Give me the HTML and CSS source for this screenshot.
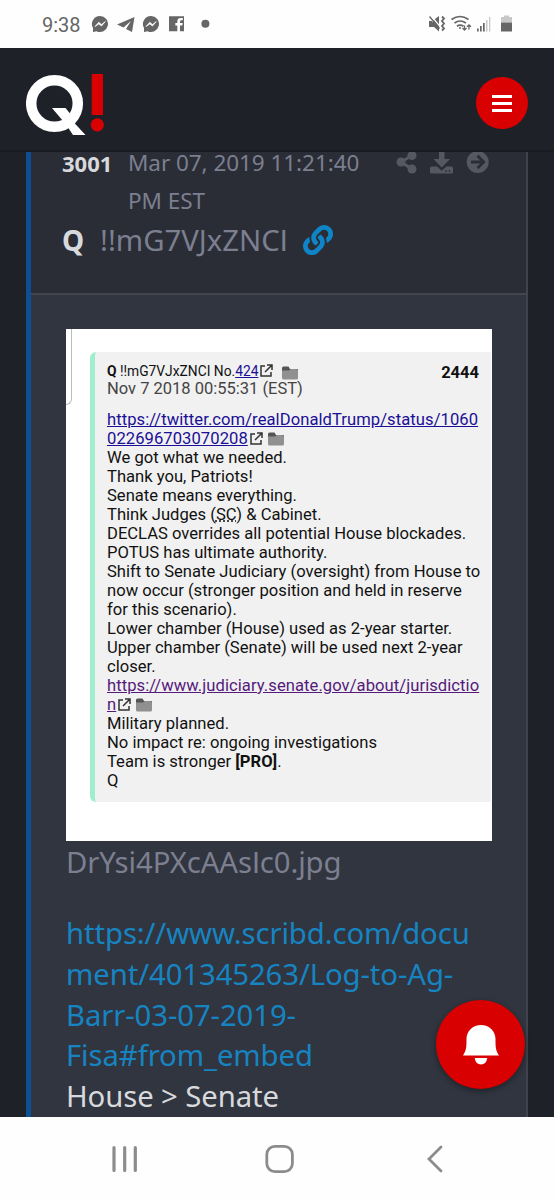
FILE: index.html
```
<!DOCTYPE html>
<html lang="en">
<head>
    <meta charset="utf-8">
    <meta name="viewport" content="width=device-width, initial-scale=1.0">
    <title>Q!</title>
    <link rel="stylesheet" href="styles.css">
</head>
<body>
    <div class="statusbar">
        <span class="clock">9:38</span>
        <svg class="status-left" width="120" height="18" viewBox="0 0 120 18" fill="#666">
            <path d="M9 1a8 8 0 1 1-3.500 15.200L2 17V13A8 8 0 0 1 9 1z"/>
            <path d="M4 11.500l3.800-4.200 2.700 2.200 3.800-3-3.800 4.500-2.700-2z" fill="#fff" stroke="#fff" stroke-width=".7"/>
            <path d="M26 9.500L43.500 2 41 17l-6-3 5-8-7.500 6.500z"/>
            <path d="M60 1a8 8 0 1 1-3.500 15.200L53 17V13A8 8 0 0 1 60 1z"/>
            <path d="M55 11.500l3.800-4.200 2.700 2.200 3.800-3-3.800 4.500-2.700-2z" fill="#fff" stroke="#fff" stroke-width=".7"/>
            <path d="M78 1.300h15v15h-4v-5.800h2.300l.4-2.400H89V6.600q0-1.300 1.400-1.300h1.400V3h-2q-3.500 0-3.500 3.400v1.700h-2v2.400h2v5.800H78z"/>
            <circle cx="114.400" cy="8.800" r="4"/>
        </svg>
        <svg class="status-right" width="86" height="18" viewBox="0 0 86 18" fill="#666">
            <path d="M1 6h3l7 10.500-5-4.500H1zM7 4l4-3v15.500L5 11V6z"/>
            <path d="M2.500 0l10 12" stroke="#fff" stroke-width="1.200"/>
            <path d="M1.500 1.500l10 12" stroke="#666" stroke-width="1.300"/>
            <path d="M14 1.500l2 2-2 2.500 2 2.500-2 2.500 2 2.500-2 2" fill="none" stroke="#666" stroke-width="1.800"/>
            <g fill="none" stroke="#666" stroke-width="1.700">
                <path d="M23.500 4.500q8.500-6 17 0M26.500 8q5.500-4 11.500 0M29 11.200q3-2.200 6.500 0"/>
                <path d="M36.500 10.500v5M34.500 13l2 2 2-2M41 14.500v-5M39 11.800l2-2 2 2" stroke-width="1.300"/>
            </g>
            <circle cx="32" cy="13" r="1"/>
            <path d="M49 13.500h1.700v3H49zM52 11h1.700v5.500H52zM55 8h1.700v8.500H55z"/>
            <path d="M58 5h1.500v11.500H58zM61 2h1.300v14.500H61zM73 2h3V.5h5V2h3v5.500H73z" fill="#c8c8c8"/>
            <path d="M73 7.500h11v9H73z"/>
        </svg>
    </div>
    <div class="topbar">
        <svg class="logo" width="80" height="62" viewBox="0 0 80 62">
            <circle cx="28.500" cy="29.500" r="23.300" fill="none" stroke="#fff" stroke-width="10.500"/>
            <path d="M26 34h13.500l4.500 5.500-2 10 5-2 12.500 13.500H47L40 50.500z" fill="#fff"/>
            <path d="M65.700 0h11.300v41H65.700z" fill="#d80000"/>
            <circle cx="71.300" cy="50.800" r="6.600" fill="#d80000"/>
        </svg>
        <button class="menu" aria-label="Menu">
            <span></span><span></span><span></span>
        </button>
    </div>
    <div class="feed">
        <div class="card">
            <div class="card-head">
                <div class="meta">
                    <b class="num">3001</b>
                    <span class="date">Mar 07, 2019 11:21:40<br>PM EST</span>
                    <svg class="tools" width="94" height="24" viewBox="0 0 94 24" fill="#555862">
                        <path d="M16 4.500L5 11l11 7" fill="none" stroke="#555862" stroke-width="3"/>
                        <circle cx="5" cy="11" r="4.500"/>
                        <circle cx="16" cy="4.500" r="4.500"/>
                        <circle cx="16" cy="18" r="4.500"/>
                        <path d="M43 0h5.500v8H54l-8.300 8.500L37.500 8H43z"/>
                        <path d="M36 15.500h5l4.700 4.200 4.700-4.200h5q1.600 0 1.600 1.500v4q0 1.500-1.500 1.500h-20q-1.500 0-1.500-1.500v-4q0-1.500 2-1.500z"/>
                        <circle cx="50" cy="20" r=".9" fill="#2a2d35"/>
                        <circle cx="53.500" cy="20" r=".9" fill="#2a2d35"/>
                        <circle cx="81.700" cy="11" r="11"/>
                        <path d="M75 11h12M81.500 4.800l6.200 6.200-6.200 6.200" fill="none" stroke="#2a2d35" stroke-width="2.800"/>
                    </svg>
                </div>
                <div class="author">
                    <b>Q</b>
                    <span class="trip">!!mG7VJxZNC<span class="cap-i">I</span></span>
                    <svg class="chain" width="30" height="30" viewBox="0 0 512 512" fill="#0f84c6">
                        <path d="M326.612 185.391c59.747 59.809 58.927 155.698.36 214.590-.11.120-.24.250-.36.370l-67.200 67.200c-59.270 59.270-155.699 59.262-214.960 0-59.270-59.260-59.270-155.700 0-214.960l37.106-37.106c9.840-9.840 26.786-3.300 27.294 10.606.648 17.722 3.826 35.527 9.690 52.721 1.986 5.822.567 12.262-3.783 16.612l-13.087 13.087c-28.026 28.026-28.905 73.660-1.155 101.960 28.024 28.579 74.086 28.749 102.325.510l67.200-67.190c28.191-28.191 28.073-73.757 0-101.830-3.701-3.694-7.429-6.564-10.341-8.569a16.037 16.037 0 0 1-6.947-12.606c-.396-10.567 3.348-21.456 11.698-29.806l21.054-21.055c5.521-5.521 14.182-6.199 20.584-1.731a152.482 152.482 0 0 1 20.522 17.197zM467.547 44.449c-59.261-59.262-155.690-59.270-214.960 0l-67.200 67.200c-.12.120-.25.250-.36.370-58.566 58.892-59.387 154.781.36 214.590a152.454 152.454 0 0 0 20.521 17.196c6.402 4.468 15.064 3.789 20.584-1.731l21.054-21.055c8.350-8.350 12.094-19.239 11.698-29.806a16.037 16.037 0 0 0-6.947-12.606c-2.912-2.005-6.640-4.875-10.341-8.569-28.073-28.073-28.191-73.639 0-101.830l67.200-67.190c28.239-28.239 74.300-28.069 102.325.510 27.750 28.300 26.872 73.934-1.155 101.960l-13.087 13.087c-4.350 4.350-5.769 10.790-3.783 16.612 5.864 17.194 9.042 34.999 9.690 52.721.509 13.906 17.454 20.446 27.294 10.606l37.106-37.106c59.271-59.259 59.271-155.699.001-214.959z"/>
                    </svg>
                </div>
            </div>
            <div class="card-body">
                <div class="shot">
                    <div class="edge"></div>
                    <div class="post">
                        <div class="post-head">
                            <div>
                                <div class="post-id"><b>Q</b> !!mG7VJxZNCI No.<a>424</a><svg class="ext" viewBox="0 0 13 13"><path d="M5 2H1v10h10V8M7 1h5v5M12 1L5 8"/></svg><svg class="folder gap" viewBox="0 0 16 14"><path d="M0 2q0-1.500 1.500-1.500h5L8 3H16v9H0z" fill="#555"/><path d="M0 4.500h7L9 3h5.500Q16 3 16 4.500V12q0 1.500-1.500 1.500h-13Q0 13.500 0 12z" fill="#909090"/></svg></div>
                                <div class="post-date">Nov 7 2018 00:55:31 (EST)</div>
                            </div>
                            <b class="post-num">2444</b>
                        </div>
                        <div class="post-text">
                            <a>https://twitter.com/realDonaldTrump/status/1060</a><br>
                            <a>022696703070208</a><svg class="ext" viewBox="0 0 13 13"><path d="M5 2H1v10h10V8M7 1h5v5M12 1L5 8"/></svg><svg class="folder" viewBox="0 0 16 14"><path d="M0 2q0-1.500 1.500-1.500h5L8 3H16v9H0z" fill="#555"/><path d="M0 4.500h7L9 3h5.500Q16 3 16 4.500V12q0 1.500-1.500 1.500h-13Q0 13.500 0 12z" fill="#909090"/></svg><br>
                            We got what we needed.<br>
                            Thank you, Patriots!<br>
                            Senate means everything.<br>
                            Think Judges (<abbr>SC</abbr>) &amp; Cabinet.<br>
                            DECLAS overrides all potential House blockades.<br>
                            POTUS has ultimate authority.<br>
                            Shift to Senate Judiciary (oversight) from House to<br>
                            now occur (stronger position and held in reserve<br>
                            for this scenario).<br>
                            Lower chamber (House) used as 2-year starter.<br>
                            Upper chamber (Senate) will be used next 2-year<br>
                            closer.<br>
                            <a class="visited">https://www.judiciary.senate.gov/about/jurisdictio</a><br>
                            <a class="visited">n</a><svg class="ext" viewBox="0 0 13 13"><path d="M5 2H1v10h10V8M7 1h5v5M12 1L5 8"/></svg><svg class="folder" viewBox="0 0 16 14"><path d="M0 2q0-1.500 1.500-1.500h5L8 3H16v9H0z" fill="#555"/><path d="M0 4.500h7L9 3h5.500Q16 3 16 4.500V12q0 1.500-1.500 1.500h-13Q0 13.500 0 12z" fill="#909090"/></svg><br>
                            Military planned.<br>
                            No impact re: ongoing investigations<br>
                            Team is stronger <b>[PRO]</b>.<br>
                            Q
                        </div>
                    </div>
                </div>
                <div class="filename">DrYsi4PXcAAs<span class="cap-i">I</span>c0.jpg</div>
                <div class="message">
                    <a>https://www.scribd.com/docu<br>ment/401345263/Log-to-Ag-<br>Barr-03-07-2019-<br>Fisa#from_embed</a><br>
                    House &gt; Senate
                </div>
            </div>
        </div>
    </div>
    <div class="navbar">
        <svg width="26" height="28" viewBox="0 0 26 28" stroke="#8c8c8c" stroke-width="3.200" stroke-linecap="round"><path d="M2 2.500v23M12.700 2.500v23M23.300 2.500v23"/></svg>
        <svg class="home" width="30" height="28" viewBox="0 0 30 28" fill="none" stroke="#8c8c8c" stroke-width="2.800"><rect x="1.800" y="1.400" width="25.600" height="25.200" rx="8"/></svg>
        <svg width="16" height="28" viewBox="0 0 16 28" fill="none" stroke="#8c8c8c" stroke-width="2.800" stroke-linecap="round"><path d="M14 2L2 14l12 12"/></svg>
    </div>
    <button class="bell" aria-label="Notifications">
        <svg width="36" height="40" viewBox="0 0 36 40" fill="#fff"><path d="M18 0C26 0 32.500 6 32.500 14c0 8 0 11 3.500 16.500H0C3.500 25 3.500 22 3.500 14 3.500 6 10 0 18 0zM11.700 33h12.600q-1 6.500-6.300 6.500T11.700 33z"/></svg>
    </button>
</body>
</html>
```
FILE: styles.css
```
* {
    box-sizing: border-box;
}
body {
    margin: 0;
    width: 554px;
    height: 1200px;
    overflow: hidden;
    display: flex;
    flex-direction: column;
    background-color: #1e2128;
    font-family: "Noto Sans", sans-serif;
}
svg {
    flex: none;
}
button {
    border: 0;
    padding: 0;
    border-radius: 50%;
    background-color: #d80000;
}
.statusbar {
    height: 48px;
    flex: none;
    display: flex;
    align-items: center;
    padding: 0 40px 0 42px;
    background-color: #fefefe;
}
.clock {
    width: 49px;
    padding-top: 1px;
    font-family: Roboto, sans-serif;
    font-size: 20px;
    color: #666;
}
.status-right {
    margin-left: auto;
}
.topbar {
    height: 104px;
    flex: none;
    display: flex;
    justify-content: space-between;
    align-items: center;
    padding: 4px 26px 0;
    border-bottom: 2px solid #1a1c21;
    background-color: #1e2128;
}
.logo {
    margin-top: 7px;
}
.menu {
    width: 52px;
    height: 52px;
    margin-top: 4px;
    display: flex;
    flex-direction: column;
    align-items: center;
    justify-content: center;
    gap: 4px;
}
.menu span {
    width: 20px;
    height: 3px;
    background-color: #fff;
}

/* drop card */
.feed {
    flex: 1;
    overflow: hidden;
    padding: 0 26px;
}
.card {
    height: 966px;
    border-left: 5px solid #0d4f93;
    border-right: 2px solid #40434b;
    background-color: #30353f;
}
.card-head {
    height: 143px;
    padding-left: 31px;
    border-bottom: 2px solid #43464f;
    background-color: #2a2d35;
    color: #7c7f90;
}
.card-head b {
    color: #d8d9dd;
}
.meta {
    height: 67px;
    display: flex;
    font-size: 22.500px;
    line-height: 24px;
}
.num {
    width: 66px;
    margin-top: -1px;
    font-size: 22px;
}
.date {
    width: 268px;
    margin-top: -8px;
    line-height: 38px;
    letter-spacing: -.05px;
}
.tools {
    margin-top: -1px;
}
.author {
    display: flex;
    align-items: center;
    height: 41px;
    font-size: 29.300px;
}
.author b {
    width: 38px;
    font-size: 28px;
}
.chain {
    margin-left: 15px;
}
.cap-i {
    font-family: Roboto, sans-serif;
}
.card-body {
    padding: 34px 35px 0;
    font-size: 29.300px;
    line-height: 40.800px;
    letter-spacing: -.1px;
}

/* picture attached to the drop */
.shot {
    width: 426px;
    height: 512px;
    display: flex;
    background-color: #fff;
    font-family: Roboto, sans-serif;
    letter-spacing: 0;
    color: #111;
}
.edge {
    width: 6px;
    height: 76px;
    border-right: 1px solid #bbb;
    border-bottom: 1px solid #bbb;
    border-radius: 0 0 6px 0;
}
.post {
    width: 401px;
    height: 450px;
    margin: 23px 0 0 18px;
    padding: 10px 12px 0;
    border-left: 5px solid #a0edcf;
    border-radius: 6px 2px 2px 6px;
    background-color: #f1f1f1;
}
.post-head {
    height: 48px;
    display: flex;
    justify-content: space-between;
}
.post-id {
    font-size: 13.800px;
    line-height: 18px;
}
.post-date {
    font-size: 16.500px;
    line-height: 17px;
    color: #444;
}
.post-num {
    font-size: 16.500px;
    line-height: 21px;
}
.post-text {
    font-size: 16.600px;
    line-height: 19px;
    white-space: nowrap;
}
.post a {
    color: #1a0f96;
    text-decoration: underline;
}
.post-text a {
    letter-spacing: .06px;
}
.post a.visited {
    color: #551a7b;
}
.post abbr {
    text-decoration: underline dotted;
}
.ext {
    width: 13px;
    height: 13px;
    margin-left: 2px;
    vertical-align: -1px;
    fill: none;
    stroke: #333;
    stroke-width: 1.500;
}
.folder {
    width: 16px;
    height: 14px;
    margin-left: 5px;
    vertical-align: -2px;
}
.folder.gap {
    margin-left: 9px;
    vertical-align: -4px;
}
.filename {
    height: 72px;
    padding-top: 1px;
    color: #7c7f90;
}
.message {
    color: #d8d9dd;
    white-space: nowrap;
}
.message a {
    color: #1784c2;
}

.navbar {
    height: 83px;
    flex: none;
    display: flex;
    align-items: center;
    justify-content: space-between;
    padding: 0 111px 0 112px;
    background-color: #fefefe;
}
.home {
    margin-right: 6px;
}
.bell {
    position: fixed;
    right: 29px;
    bottom: 111px;
    width: 89px;
    height: 89px;
    display: flex;
    align-items: center;
    justify-content: center;
    box-shadow: 0 2px 6px rgba(0, 0, 0, .4);
}
```
